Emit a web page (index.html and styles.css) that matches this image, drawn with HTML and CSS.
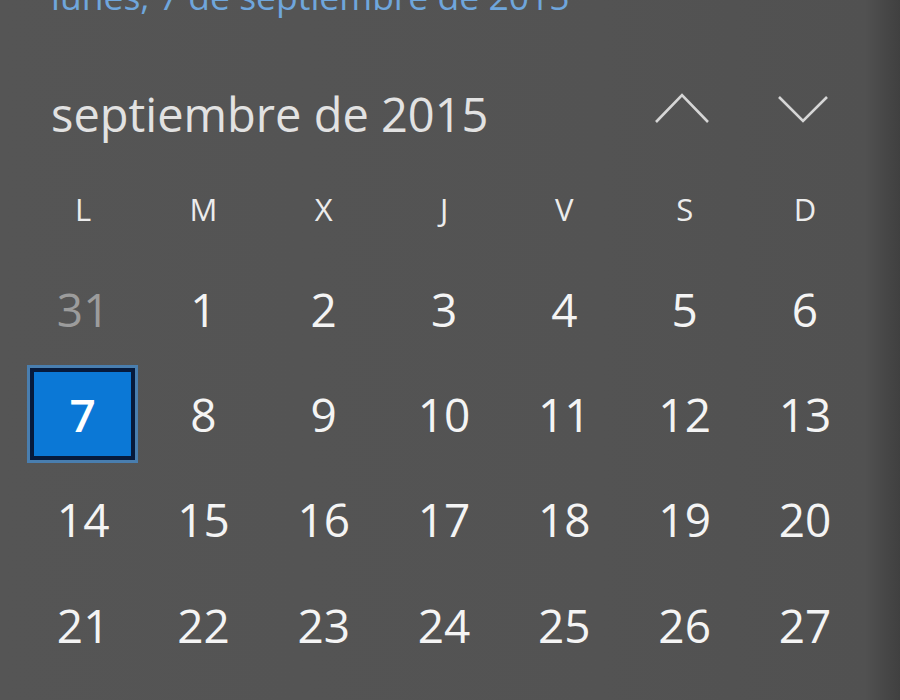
FILE: index.html
```html
<!DOCTYPE html>
<html lang="es">
<head>
<meta charset="utf-8">
<title>Calendario</title>
<link rel="stylesheet" href="styles.css">
</head>
<body>
<div class="panel">
  <div class="date-link">lunes, 7 de septiembre de 2015</div>
  <div class="month-bar">
    <div class="month-title">septiembre de 2015</div>
    <div class="nav">
      <svg class="chev" width="56" height="34" viewBox="0 0 56 34"><polyline points="2,30 28,3 54,30" fill="none" stroke="#d6d6d6" stroke-width="2.6"/></svg>
      <svg class="chev" width="56" height="34" viewBox="0 0 56 34"><polyline points="3,5 27,29 51,5" fill="none" stroke="#d6d6d6" stroke-width="2.6"/></svg>
    </div>
  </div>
  <div class="grid">
    <div class="wd">L</div><div class="wd">M</div><div class="wd">X</div><div class="wd">J</div><div class="wd">V</div><div class="wd">S</div><div class="wd">D</div>
    <div class="day other">31</div><div class="day">1</div><div class="day">2</div><div class="day">3</div><div class="day">4</div><div class="day">5</div><div class="day">6</div>
    <div class="day"><span class="selected">7</span></div><div class="day">8</div><div class="day">9</div><div class="day">10</div><div class="day">11</div><div class="day">12</div><div class="day">13</div>
    <div class="day">14</div><div class="day">15</div><div class="day">16</div><div class="day">17</div><div class="day">18</div><div class="day">19</div><div class="day">20</div>
    <div class="day">21</div><div class="day">22</div><div class="day">23</div><div class="day">24</div><div class="day">25</div><div class="day">26</div><div class="day">27</div>
  </div>
</div>
</body>
</html>
```
FILE: styles.css
```css
html, body {
  margin: 0;
  height: 100%;
}
body {
  background: linear-gradient(to right, #555555 0px, #535353 600px, #515151 865px, #474747 885px, #404040 900px);
  font-family: "Open Sans", "Noto Sans", sans-serif;
  overflow: hidden;
}
.panel {
  width: 900px;
  height: 700px;
}
.date-link {
  color: #6fa6dc;
  font-size: 35.5px;
  line-height: 40px;
  margin-top: -24px;
  padding-left: 51px;
  white-space: nowrap;
}
.month-bar {
  display: flex;
  align-items: center;
  justify-content: space-between;
  height: 104px;
  margin-top: 42px;
  padding-left: 51px;
  padding-right: 68px;
}
.month-title {
  color: #e2e2e2;
  font-size: 47px;
  line-height: 60px;
  margin-top: 8px;
}
.nav {
  display: flex;
  gap: 66px;
  margin-top: -2px;
}
.grid {
  display: grid;
  grid-template-columns: repeat(7, 120.3px);
  grid-template-rows: 94px repeat(4, 105.3px);
  padding-left: 23px;
}
.wd, .day {
  display: flex;
  align-items: center;
  justify-content: center;
}
.wd {
  color: #ececec;
  font-size: 31px;
}
.day {
  color: #f4f4f4;
  font-size: 46px;
}
.day.other {
  color: #9c9c9c;
}
.selected {
  box-sizing: border-box;
  width: 105px;
  height: 92px;
  display: flex;
  align-items: center;
  justify-content: center;
  background: #0b78d6;
  border: 4px solid #061a3c;
  box-shadow: 0 0 0 3px rgba(70, 140, 205, 0.75);
  color: #ffffff;
  font-weight: 600;
  margin-left: -1px;
}
```
